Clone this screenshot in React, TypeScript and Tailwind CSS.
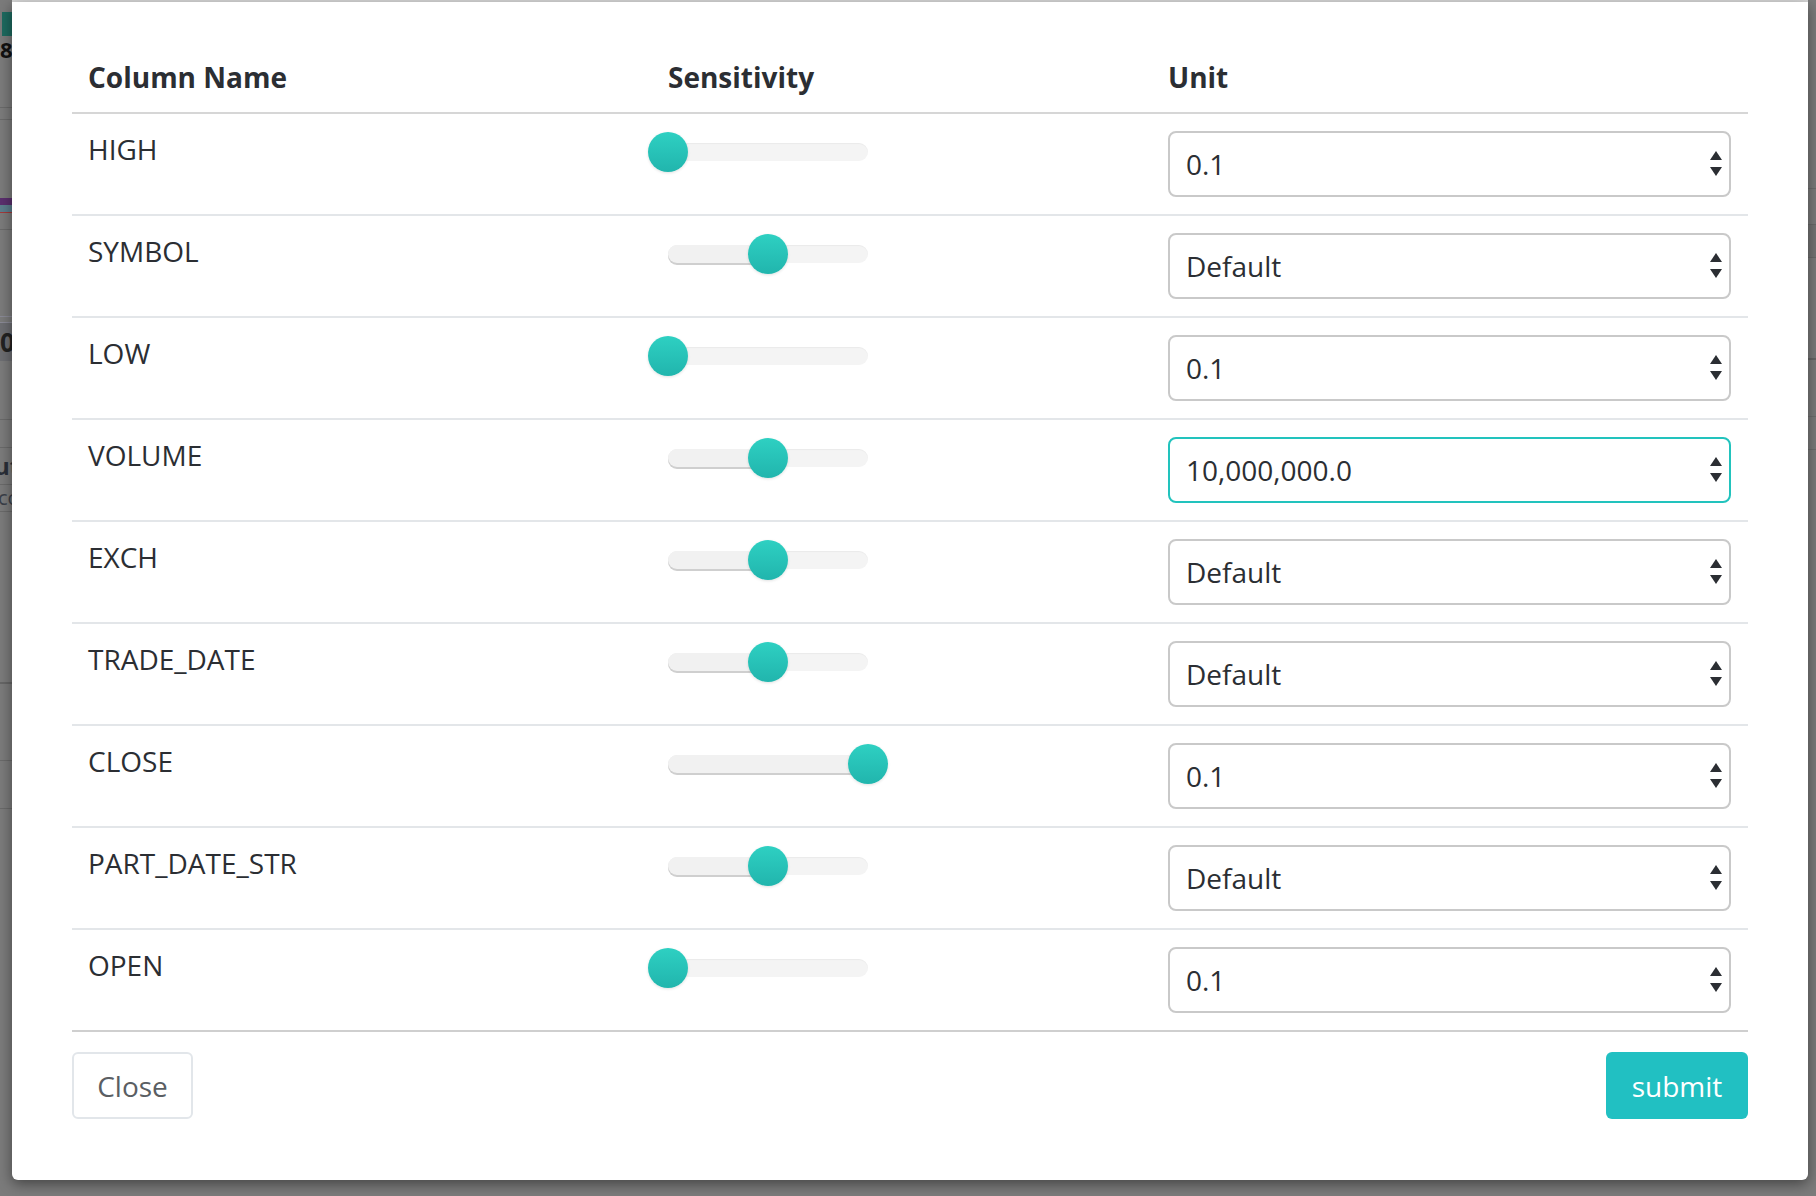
import React from "react";

type Row = { name: string; v: number; unit: string; focus?: boolean };

const rows: Row[] = [
  { name: "HIGH", v: 0, unit: "0.1" },
  { name: "SYMBOL", v: 50, unit: "Default" },
  { name: "LOW", v: 0, unit: "0.1" },
  { name: "VOLUME", v: 50, unit: "10,000,000.0", focus: true },
  { name: "EXCH", v: 50, unit: "Default" },
  { name: "TRADE_DATE", v: 50, unit: "Default" },
  { name: "CLOSE", v: 100, unit: "0.1" },
  { name: "PART_DATE_STR", v: 50, unit: "Default" },
  { name: "OPEN", v: 0, unit: "0.1" },
];

function Slider({ v }: { v: number }) {
  return (
    <div className="relative w-[200px] h-[40px] flex items-center">
      <div className="relative w-[200px] h-[18px] rounded-[9px] bg-[#f4f4f4] shadow-[inset_0_1px_1px_rgba(0,0,0,0.04)]">
        <div
          className="h-[18px] rounded-[9px] bg-[#f1f1f1] shadow-[0_2px_0_#cfcfcf]"
          style={{ width: `${v}%` }}
        />
      </div>
      <div
        className="absolute top-0 w-[40px] h-[40px] -ml-[20px] rounded-full bg-gradient-to-b from-[#2ed0c2] to-[#21b5ad] shadow-[0_1px_3px_rgba(0,0,0,0.12)]"
        style={{ left: `${v * 2}px` }}
      />
    </div>
  );
}

function Select({ value, focus }: { value: string; focus?: boolean }) {
  return (
    <div
      className={
        "w-[563px] h-[66px] rounded-[8px] border-2 bg-white flex items-center justify-between pl-[16px] pr-[7px] " +
        (focus ? "border-[#22c3bd]" : "border-[#c9c9c9]")
      }
    >
      <span className="text-[28px] leading-[42px] text-[#2b2e33]">{value}</span>
      <svg width="12" height="26" viewBox="0 0 12 26">
        <polygon points="6,0 12,9 0,9" fill="#2b2e33" />
        <polygon points="0,16 12,16 6,25" fill="#2b2e33" />
      </svg>
    </div>
  );
}

function LeftStrip() {
  return (
    <div className="w-[12px] shrink-0 flex flex-col overflow-hidden">
      <div className="h-[12px]" />
      <div className="h-[24px] ml-[2px] bg-[#1d6a5f]" />
      <div className="h-[24px] text-[22px] leading-[24px] font-bold text-[#111] mt-[1px]">8</div>
      <div className="h-[46px]" />
      <div className="h-[1px] bg-[#6a6a6a]" />
      <div className="h-[11px]" />
      <div className="h-[1px] bg-[#6a6a6a]" />
      <div className="h-[78px]" />
      <div className="h-[7px] bg-[#5b2f6e]" />
      <div className="h-[7px] bg-[#5c7e8d]" />
      <div className="h-[1px] bg-[#a33a3a]" />
      <div className="h-[16px]" />
      <div className="h-[1px] bg-[#6a6a6a]" />
      <div className="h-[86px]" />
      <div className="h-[1px] bg-[#8a8a96]" />
      <div className="h-[5px]" />
      <div className="h-[1px] bg-[#8a8a96]" />
      <div className="h-[38px] bg-[#6d6e72] text-[26px] leading-[38px] font-bold text-[#222]">0</div>
      <div className="h-[58px]" />
      <div className="h-[1px] bg-[#6a6a6a]" />
      <div className="h-[27px]" />
      <div className="h-[1px] bg-[#6a6a6a]" />
      <div className="h-[36px] text-[24px] leading-[36px] font-bold text-[#2a2f38] -ml-[6px]">ut</div>
      <div className="h-[1px] bg-[#6a6a6a]" />
      <div className="h-[26px] text-[20px] leading-[26px] text-[#3a3f48] -ml-[2px]">co</div>
      <div className="h-[1px] bg-[#6a6a6a]" />
      <div className="h-[170px]" />
      <div className="h-[2px] bg-[#666]" />
      <div className="h-[76px]" />
      <div className="h-[1px] bg-[#6a6a6a]" />
      <div className="h-[47px]" />
      <div className="h-[1px] bg-[#6a6a6a]" />
    </div>
  );
}

function RightStrip() {
  return (
    <div className="w-[8px] shrink-0 flex flex-col overflow-hidden">
      <div className="h-[188px]" />
      <div className="h-[1px] bg-[#6e6e6e]" />
      <div className="h-[35px]" />
      <div className="h-[34px] bg-[#747474] border-y border-[#6a6a6a]" />
      <div className="h-[100px]" />
      <div className="h-[2px] bg-[#666]" />
      <div className="h-[56px]" />
      <div className="h-[1px] bg-[#6e6e6e]" />
      <div className="h-[32px]" />
      <div className="h-[1px] bg-[#6e6e6e]" />
    </div>
  );
}

export default function App() {
  return (
    <div
      className="w-[1816px] h-[1196px] bg-[#7b7b7b] flex overflow-hidden"
      style={{ fontFamily: '"Open Sans", "Noto Sans", sans-serif' }}
    >
      <LeftStrip />
      <div className="w-[1796px] shrink-0 flex flex-col">
        <div className="h-[2px] bg-[#dadada]" />
        <div className="relative z-10 h-[1178px] bg-white rounded-b-[6px] shadow-[0_4px_14px_rgba(0,0,0,0.45)] px-[60px] pt-[54px] text-[#2b2e33]">
          {/* header */}
          <div className="grid grid-cols-[580px_500px_596px] border-b-2 border-[#d6d6d6] pb-[14px]">
            <div className="pl-[16px] text-[28px] leading-[42px] font-bold">Column Name</div>
            <div className="pl-[16px] text-[28px] leading-[42px] font-bold">Sensitivity</div>
            <div className="pl-[16px] text-[28px] leading-[42px] font-bold">Unit</div>
          </div>
          {rows.map((r, i) => (
            <div
              key={r.name}
              className={
                "grid grid-cols-[580px_500px_596px] h-[102px] border-b-2 " +
                (i === rows.length - 1 ? "border-[#cfcfcf]" : "border-[#e3e6e9]")
              }
            >
              <div className="pl-[16px] pt-[14px] text-[28px] leading-[42px]">{r.name}</div>
              <div className="pl-[16px] pt-[18px]">
                <Slider v={r.v} />
              </div>
              <div className="pl-[16px] pt-[17px]">
                <Select value={r.unit} focus={r.focus} />
              </div>
            </div>
          ))}
          {/* footer */}
          <div className="flex justify-between mt-[20px]">
            <button className="w-[121px] h-[67px] rounded-[6px] border-2 border-[#e2e6ea] bg-white text-[28px] text-[#5a5e63]">
              Close
            </button>
            <button className="w-[142px] h-[67px] rounded-[6px] bg-[#21c0c2] text-[28px] text-white">
              submit
            </button>
          </div>
        </div>
      </div>
      <RightStrip />
    </div>
  );
}
